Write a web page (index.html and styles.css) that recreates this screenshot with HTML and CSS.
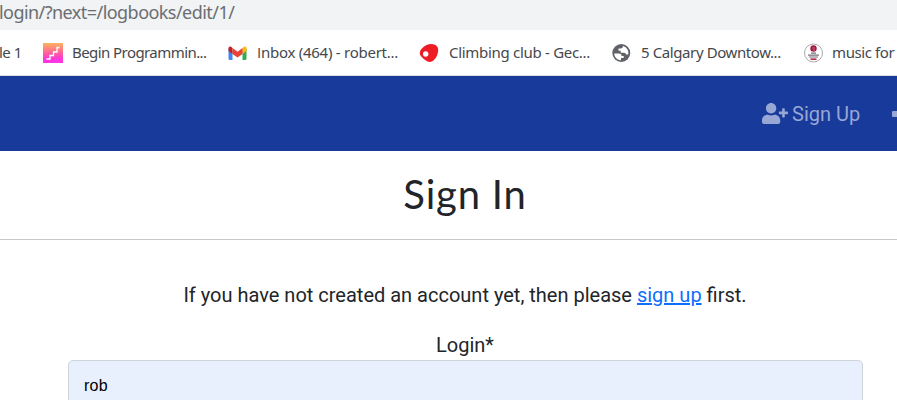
FILE: index.html
```html
<!DOCTYPE html>
<html lang="en">
<head>
<meta charset="utf-8">
<title>Sign In</title>
<link rel="stylesheet" href="styles.css">
</head>
<body>
<div class="address"><span>login/?next=/logbooks/edit/1/</span></div>
<div class="bookmarks">
  <div class="bm first"><span class="t0">le 1</span></div>
  <div class="bm b1">
    <svg width="20" height="20" viewBox="0 0 20 20"><defs><linearGradient id="g" x1="0" y1="0" x2="0" y2="1"><stop offset="0" stop-color="#fcb45d"/><stop offset=".5" stop-color="#ff609b"/><stop offset=".8" stop-color="#ff35dc"/><stop offset="1" stop-color="#ff38e6"/></linearGradient></defs><path fill="url(#g)" d="M0 0h20v20H0z"/><path d="M3.500 16H7v-3.500h3.500V9H14V4.500h2.500" fill="none" stroke="#fff" stroke-width="1.300"/></svg>
    <span class="t1">Begin Programmin...</span>
  </div>
  <div class="bm b2">
    <svg width="19" height="20" viewBox="0 0 19 20"><path fill="#4285f4" d="M.5 5.500 4.500 8v9H2Q.5 17 .5 15.500z"/><path fill="#34a853" d="M14.500 8 18.500 5.500v10Q18.500 17 17 17h-2.500z"/><path fill="#fbbc04" d="M14.500 5 16 3.800Q18.500 3 18.500 5.500V8l-4 3z"/><path fill="#c5221f" d="M.5 8V5.500Q.5 3 3 3.800L4.500 5v6z"/><path fill="#ea4335" d="m4.500 5 5 3.800 5-3.800v6l-5 3.500-5-3.500z"/></svg>
    <span class="t2"><span class="cap">I</span>nbox (464) - robert...</span>
  </div>
  <div class="bm b3">
    <svg width="20" height="20" viewBox="0 0 20 20"><path fill="#ee1c25" d="M7.500 2Q12 .2 16 1.700 20 3.800 19 9q-1 5.500-4.500 8.500-3 2.400-6.500.7-3-1.500-6-5Q-.5 10 2 6.500 4 3.500 7.500 2z"/><circle cx="6.700" cy="11" r="2.700" fill="#fff"/></svg>
    <span class="t3">Climbing club - Gec...</span>
  </div>
  <div class="bm b4">
    <svg width="19" height="20" viewBox="0 0 19 20"><circle cx="9.300" cy="10" r="9" fill="#5f6368"/><path fill="#fff" d="M2.200 10.500h5q2.500.1 2.500 2.500h2v2H9v2.300Q5 17 3.200 14 2.200 12.300 2.200 10.500zM11 3.100q3 .7 4.500 3.400 1.200 2.300.8 5h-2q-.7-1.700-2.300-1.700H8.700V7.700H6.500V5.500H9q2 0 2-2.400z"/></svg>
    <span class="t4">5 Calgary Downtow...</span>
  </div>
  <div class="bm b5">
    <svg width="20" height="20" viewBox="0 0 20 20"><circle cx="9.500" cy="10" r="9" fill="#fff" stroke="#aaa9ad" stroke-width="1"/><circle cx="9.500" cy="5.500" r="3.200" fill="#a3183d"/><path d="M8 5h3M9 7h2" stroke="#d78a9d" stroke-width=".7"/><path d="M7 10.200h5M4 12.200h11M5 14h9" stroke="#77727c" stroke-width="1.200"/><path d="M6.500 16.200h6" stroke="#b9304f" stroke-width="1.700"/></svg>
    <span class="t5">music for</span>
  </div>
</div>
<nav class="nav">
  <a class="signup"><svg width="26" height="21" viewBox="0 0 640 512"><path fill="currentColor" d="M624 208h-64v-64c0-8.800-7.200-16-16-16h-32c-8.800 0-16 7.200-16 16v64h-64c-8.800 0-16 7.200-16 16v32c0 8.800 7.200 16 16 16h64v64c0 8.800 7.200 16 16 16h32c8.800 0 16-7.200 16-16v-64h64c8.800 0 16-7.200 16-16v-32c0-8.800-7.200-16-16-16zm-400 48c70.700 0 128-57.300 128-128S294.700 0 224 0 96 57.300 96 128s57.300 128 128 128zm89.600 32h-16.700c-22.200 10.200-46.900 16-72.900 16s-50.600-5.800-72.900-16h-16.700C60.200 288 0 348.200 0 422.400V464c0 26.500 21.500 48 48 48h352c26.500 0 48-21.500 48-48v-41.600c0-74.200-60.200-134.400-134.400-134.400z"/></svg><span>Sign Up</span></a>
  <i class="more"></i>
</nav>
<main>
  <h1><span>Sign In</span></h1>
  <p>If you have not created an account yet, then please <a>sign up</a> first.</p>
  <label>Login*</label>
  <div class="field">rob</div>
</main>
</body>
</html>
```
FILE: styles.css
```css
* { box-sizing: border-box; }
body { margin: 0; height: 400px; overflow: hidden; background: #fff; color: #212529; font: 20px/30px Roboto, sans-serif; }
.address { height: 30px; background: #f1f3f4; color: #6a6e72; font: 18px/25px "Noto Sans", sans-serif; white-space: nowrap; }
.address span { display: inline-block; margin-left: -1px; letter-spacing: -.55px; }
.bookmarks { height: 46px; display: flex; border-bottom: 1px solid #dfe1e5; color: #45484c; font: 15px/45px "Noto Sans", sans-serif; white-space: nowrap; overflow: hidden; }
.bm { display: flex; align-items: center; gap: 10px; flex: none; }
.bm svg { flex: none; }
.first { width: 43px; }
.t0 { margin-left: -1px; letter-spacing: -.5px; }
.b1 { width: 185px; gap: 9px; }
.b2 { width: 191px; }
.b3 { width: 193px; }
.b4 { width: 192px; }
.b5 { gap: 8px; }
.cap { font-family: "Open Sans", sans-serif; }
.t1 { letter-spacing: -.57px; }
.t2 { letter-spacing: -.26px; }
.t3 { letter-spacing: -.3px; }
.t4, .t5 { letter-spacing: -.4px; }
.nav { height: 75px; display: flex; align-items: center; background: #173a9b; color: #98a7d4; padding-left: 762px; overflow: hidden; }
.signup { display: flex; align-items: center; gap: 4px; width: 130px; flex: none; }
.nav .more { width: 10px; height: 6px; border-radius: 1px; background: currentColor; flex: none; }
main { text-align: center; }
h1 { margin: 0; height: 89px; border-bottom: 1px solid #c8c8c9; font: 400 40px/87px Lato, sans-serif; letter-spacing: .8px; padding-left: 33px; }
p { margin: 40px 0 20px; padding-left: 33px; }
p a { color: #0d6efd; text-decoration: underline; }
label { display: block; padding-left: 33px; }
.field { margin: 0 34px 0 68px; height: 50px; border: 1px solid #ced4da; border-radius: 5px; background: #e8effd; color: #000; text-align: left; padding: 0 15px; font: 16px/50px "Liberation Sans", sans-serif; letter-spacing: .2px; }
```
